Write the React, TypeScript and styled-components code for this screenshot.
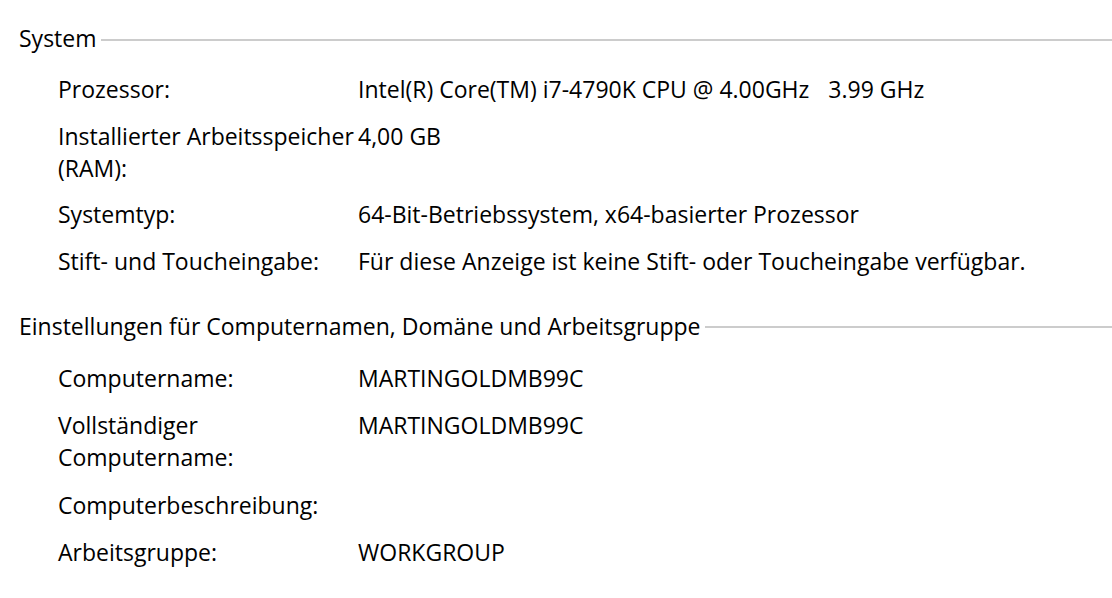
import React from 'react'
import styled, { createGlobalStyle } from 'styled-components'

const GlobalStyle = createGlobalStyle`
  body {
    margin: 0;
    background: #ffffff;
    color: #000000;
    font-family: "Segoe UI", "Open Sans", "Noto Sans", sans-serif;
    font-size: 23px;
    line-height: 32px;
  }
`

const Page = styled.div`
  padding: 22px 0 0 19px;
  overflow: hidden;
`

const Section = styled.section`
  margin-bottom: 33px;
`

const Heading = styled.div<{ $space: number }>`
  display: flex;
  align-items: center;
  gap: 4px;
  margin-bottom: ${(p) => p.$space}px;

  &::after {
    content: '';
    flex: 1;
    height: 2px;
    margin-top: 3px;
    background: #cccccc;
  }
`

const InfoGrid = styled.div<{ $gap: number }>`
  display: grid;
  grid-template-columns: 300px 1fr;
  row-gap: ${(p) => p.$gap}px;
  padding-left: 39px;
`

const Label = styled.div`
  white-space: pre-line;
`

const Value = styled.div`
  white-space: nowrap;
`

const Spacer = styled.span`
  display: inline-block;
  width: 19px;
`

type Row = { label: string; value: React.ReactNode }

const systemRows: Row[] = [
  {
    label: 'Prozessor:',
    value: (
      <>
        Intel(R) Core(TM) i7-4790K CPU @ 4.00GHz<Spacer />3.99 GHz
      </>
    ),
  },
  { label: 'Installierter Arbeitsspeicher\n(RAM):', value: '4,00 GB' },
  { label: 'Systemtyp:', value: '64-Bit-Betriebssystem, x64-basierter Prozessor' },
  { label: 'Stift- und Toucheingabe:', value: 'Für diese Anzeige ist keine Stift- oder Toucheingabe verfügbar.' },
]

const computerRows: Row[] = [
  { label: 'Computername:', value: 'MARTINGOLDMB99C' },
  { label: 'Vollständiger\nComputername:', value: 'MARTINGOLDMB99C' },
  { label: 'Computerbeschreibung:', value: '' },
  { label: 'Arbeitsgruppe:', value: 'WORKGROUP' },
]

const InfoSection = ({ title, rows, space, gap }: { title: string; rows: Row[]; space: number; gap: number }) => (
  <Section>
    <Heading $space={space}>{title}</Heading>
    <InfoGrid $gap={gap}>
      {rows.map((r) => (
        <React.Fragment key={r.label}>
          <Label>{r.label}</Label>
          <Value>{r.value}</Value>
        </React.Fragment>
      ))}
    </InfoGrid>
  </Section>
)

const App = () => {
  return (
    <Page>
      <GlobalStyle />
      <InfoSection title="System" rows={systemRows} space={19} gap={14.5} />
      <InfoSection
        title="Einstellungen für Computernamen, Domäne und Arbeitsgruppe"
        rows={computerRows}
        space={20}
        gap={15.5}
      />
    </Page>
  )
}

export default App
